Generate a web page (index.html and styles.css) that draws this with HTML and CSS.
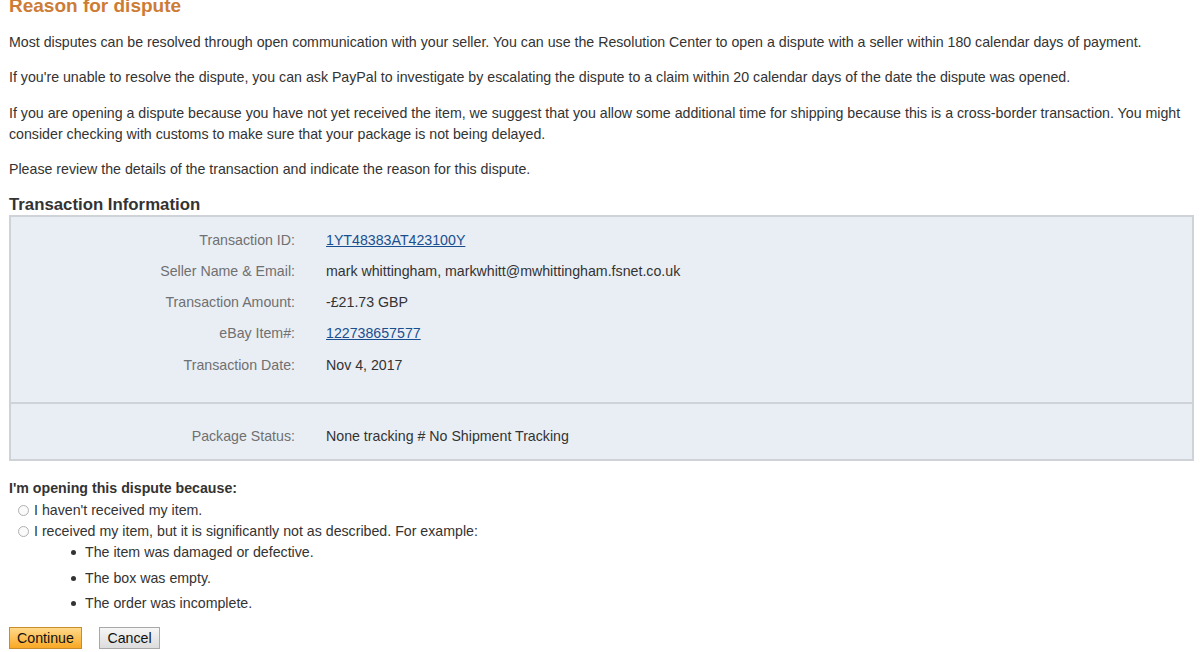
FILE: index.html
```html
<!DOCTYPE html>
<html>
<head>
<meta charset="utf-8">
<link rel="stylesheet" href="styles.css">
</head>
<body>
<div class="page">
  <h1 class="title">Reason for dispute</h1>
  <p class="para">Most disputes can be resolved through open communication with your seller. You can use the Resolution Center to open a dispute with a seller within 180 calendar days of payment.</p>
  <p class="para">If you're unable to resolve the dispute, you can ask PayPal to investigate by escalating the dispute to a claim within 20 calendar days of the date the dispute was opened.</p>
  <p class="para">If you are opening a dispute because you have not yet received the item, we suggest that you allow some additional time for shipping because this is a cross-border transaction. You might consider checking with customs to make sure that your package is not being delayed.</p>
  <p class="para">Please review the details of the transaction and indicate the reason for this dispute.</p>

  <h2 class="section-title">Transaction Information</h2>
  <div class="info-box">
    <div class="info-section first">
      <div class="row"><div class="label">Transaction ID:</div><div class="value"><a class="link" href="#">1YT48383AT423100Y</a></div></div>
      <div class="row"><div class="label">Seller Name &amp; Email:</div><div class="value">mark whittingham, markwhitt@mwhittingham.fsnet.co.uk</div></div>
      <div class="row"><div class="label">Transaction Amount:</div><div class="value">-£21.73 GBP</div></div>
      <div class="row"><div class="label">eBay Item#:</div><div class="value"><a class="link" href="#">122738657577</a></div></div>
      <div class="row"><div class="label">Transaction Date:</div><div class="value">Nov 4, 2017</div></div>
    </div>
    <div class="info-section second">
      <div class="row"><div class="label">Package Status:</div><div class="value">None tracking # No Shipment Tracking</div></div>
    </div>
  </div>

  <div class="reason">
    <div class="reason-title">I'm opening this dispute because:</div>
    <label class="option"><span class="radio"></span>I haven't received my item.</label>
    <label class="option"><span class="radio"></span>I received my item, but it is significantly not as described. For example:</label>
    <ul class="examples">
      <li>The item was damaged or defective.</li>
      <li>The box was empty.</li>
      <li>The order was incomplete.</li>
    </ul>
  </div>

  <div class="buttons">
    <button class="btn btn-primary">Continue</button>
    <button class="btn btn-secondary">Cancel</button>
  </div>
</div>
</body>
</html>
```

FILE: styles.css
```css
html, body {
  margin: 0;
  padding: 0;
  background: #ffffff;
}
body {
  font-family: "Liberation Sans", Arial, sans-serif;
  font-size: 14.2px;
  color: #333333;
  overflow: hidden;
}
.page {
  padding: 0 6px 0 9px;
  margin-top: -6px;
}
.title {
  font-size: 19px;
  font-weight: bold;
  color: #cd7c36;
  margin: 0 0 13.5px 0;
  line-height: 24px;
}
.para {
  margin: 0 0 14.5px 0;
  line-height: 21px;
}
.section-title {
  font-size: 16.8px;
  font-weight: bold;
  color: #333333;
  margin: 0;
  line-height: 20px;
}
.info-box {
  border: 2px solid #cfd3d8;
  background: #e9eef5;
  margin-top: 0;
}
.info-section.first {
  padding: 8px 0 21px 0;
}
.info-section.second {
  border-top: 2px solid #cfd3d8;
  padding: 17px 0 7px 0;
}
.row {
  display: flex;
  line-height: 31.25px;
  height: 31.25px;
}
.label {
  width: 284px;
  text-align: right;
  color: #707070;
}
.value {
  padding-left: 31px;
  color: #333333;
}
.link {
  color: #1a4f8f;
  text-decoration: underline;
}
.reason {
  margin-top: 17px;
}
.reason-title {
  font-weight: bold;
  line-height: 21px;
  margin-bottom: 1px;
}
.option {
  display: flex;
  align-items: center;
  line-height: 21px;
  padding-left: 9px;
}
.radio {
  width: 9px;
  height: 9px;
  border: 1px solid #b0b0b0;
  border-radius: 50%;
  background: #fafafa;
  margin-right: 5px;
}
.examples {
  margin: 0;
  padding-left: 62px;
  list-style: none;
}
.examples li {
  display: flex;
  align-items: center;
  line-height: 25.5px;
}
.examples li:first-child {
  margin-top: -2px;
}
.examples li::before {
  content: "";
  width: 5px;
  height: 5px;
  border-radius: 50%;
  background: #333333;
  margin-right: 9px;
}
.buttons {
  display: flex;
  gap: 17px;
  margin-top: 10px;
}
.btn {
  font-family: "Liberation Sans", Arial, sans-serif;
  font-size: 14.2px;
  height: 22px;
  padding: 0 6px;
  color: #111111;
  line-height: 18px;
}
.btn-primary {
  width: 73px;
  background: linear-gradient(#ffd98a, #f9a824);
  border: 1px solid #c98c2b;
}
.btn-secondary {
  width: 61px;
  background: linear-gradient(#f6f6f6, #dcdcdc);
  border: 1px solid #a8a8a8;
}
```
